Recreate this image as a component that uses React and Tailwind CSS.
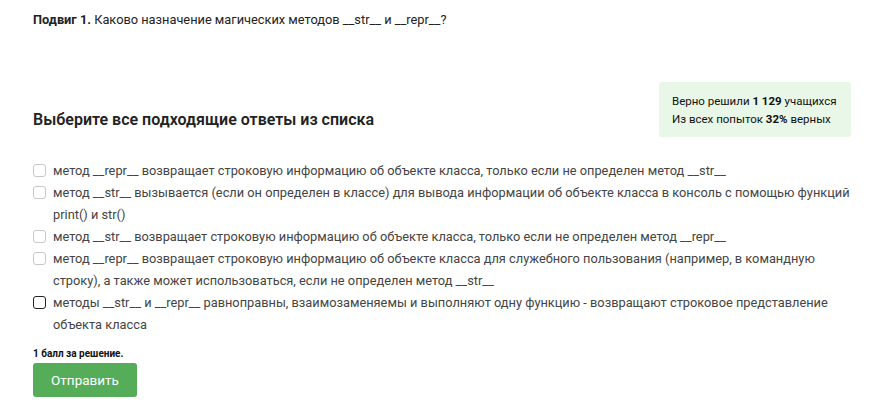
import { useState } from "react";

const options = [
  "метод __repr__ возвращает строковую информацию об объекте класса, только если не определен метод __str__",
  "метод __str__ вызывается (если он определен в классе) для вывода информации об объекте класса в консоль с помощью функций print() и str()",
  "метод __str__ возвращает строковую информацию об объекте класса, только если не определен метод __repr__",
  "метод __repr__ возвращает строковую информацию об объекте класса для служебного пользования (например, в командную строку), а также может использоваться, если не определен метод __str__",
  "методы __str__ и __repr__ равноправны, взаимозаменяемы и выполняют одну функцию - возвращают строковое представление объекта класса",
];

export default function App() {
  const [checked, setChecked] = useState([]);

  function toggle(i) {
    setChecked((c) => (c.includes(i) ? c.filter((x) => x !== i) : [...c, i]));
  }

  return (
    <div className="w-[870px] h-[419px] bg-white font-['Roboto',sans-serif] text-[#222]">
      <div className="pl-[33px] pr-[19px] pt-[11px]">
        <p className="text-[12.8px] leading-[18px]">
          <b className="font-bold">Подвиг 1.</b> Каково назначение магических методов __str__ и __repr__?
        </p>

        <div className="flex items-end justify-between mt-[53px]">
          <h2 className="text-[16px] font-semibold text-[#222] mb-[5px]">Выберите все подходящие ответы из списка</h2>
          <div className="bg-[#e8f7e8] rounded-[3px] w-[192px] h-[55px] pl-[13px] pt-[10px] text-[11.5px] leading-[18px] text-[#111]">
            <p>Верно решили <b>1 129</b> учащихся</p>
            <p>Из всех попыток <b>32%</b> верных</p>
          </div>
        </div>

        <div className="mt-[23px] flex flex-col">
          {options.map((text, i) => (
            <label key={i} className="flex items-start gap-[7px] cursor-pointer text-[12.8px] leading-[22px] text-[#444]">
              <input
                type="checkbox"
                className="sr-only"
                checked={checked.includes(i)}
                onChange={() => toggle(i)}
              />
              <span
                className={
                  "mt-[4px] w-[13px] h-[13px] shrink-0 rounded-[3px] border bg-white " +
                  (i === 4 ? "border-[#222] border-[1.5px]" : "border-[#c8c8c8]")
                }
              />
              <span>{text}</span>
            </label>
          ))}
        </div>

        <p className="mt-[10px] text-[10px] font-bold text-[#111]">1 балл за решение.</p>
        <button className="mt-[2px] w-[104px] h-[34px] rounded-[3px] bg-[#55ac59] text-white text-[13.5px]">
          Отправить
        </button>
      </div>
    </div>
  );
}
